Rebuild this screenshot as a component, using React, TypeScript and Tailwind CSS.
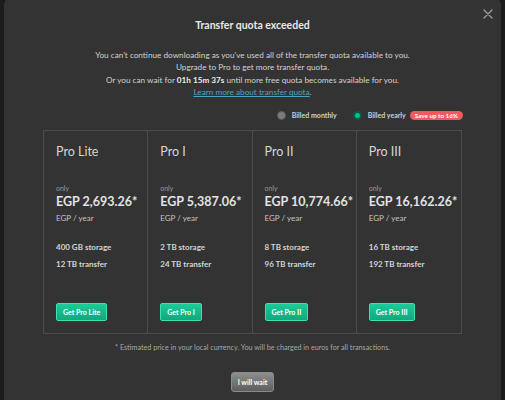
import React, { useState } from "react";

const plans = [
  { name: "Pro Lite", price: "EGP 2,693.26*", storage: "400 GB storage", transfer: "12 TB transfer" },
  { name: "Pro I", price: "EGP 5,387.06*", storage: "2 TB storage", transfer: "24 TB transfer" },
  { name: "Pro II", price: "EGP 10,774.66*", storage: "8 TB storage", transfer: "96 TB transfer" },
  { name: "Pro III", price: "EGP 16,162.26*", storage: "16 TB storage", transfer: "192 TB transfer" },
];

export default function App() {
  const [yearly, setYearly] = useState(true);

  return (
    <div className="w-[505px] h-[400px] overflow-hidden bg-[#1c1c1c] font-['Lato','Open_Sans',sans-serif]">
      <div className="relative mx-[4px] mt-[-6px] h-[420px] rounded-[12px] bg-[#333333] text-[#e6e6e6]">
        <button className="absolute right-[8px] top-[15px] text-[#9a9a9a]">
          <svg width="10" height="10" viewBox="0 0 10 10" stroke="currentColor" strokeWidth="1.4" strokeLinecap="round">
            <path d="M1 1 L9 9 M9 1 L1 9" />
          </svg>
        </button>

        <h1 className="pt-[24px] text-center text-[10.5px] font-bold leading-[14px] text-[#e8e8e8]">
          Transfer quota exceeded
        </h1>

        <div className="mt-[17px] text-center text-[8.2px] leading-[12.4px] text-[#d2d2d2]">
          <p>You can't continue downloading as you've used all of the transfer quota available to you.</p>
          <p>Upgrade to Pro to get more transfer quota.</p>
          <p>
            Or you can wait for <b className="text-[#ececec]">01h 15m 37s</b> until more free quota becomes available for you.
          </p>
          <p>
            <a className="text-[#4da2c4] underline">Learn more about transfer quota</a>.
          </p>
        </div>

        <div className="mt-[12px] mr-[38px] flex h-[10px] items-center justify-end text-[7px] font-bold text-[#d0d0d0]">
          <button onClick={() => setYearly(false)} className="flex items-center gap-[6px]">
            <span
              className={
                yearly
                  ? "h-[9px] w-[9px] rounded-full bg-[#7c7c7c] border border-[#5a5a5a]"
                  : "h-[9px] w-[9px] rounded-full bg-[#00b386] border-2 border-[#0a5c46]"
              }
            />
            Billed monthly
          </button>
          <button onClick={() => setYearly(true)} className="ml-[16px] flex items-center gap-[6px]">
            <span
              className={
                yearly
                  ? "h-[9px] w-[9px] rounded-full bg-[#00c08f] border-2 border-[#0c5a45]"
                  : "h-[9px] w-[9px] rounded-full bg-[#7c7c7c] border border-[#5a5a5a]"
              }
            />
            Billed yearly
          </button>
          <span className="ml-[4px] rounded-full bg-[#f05a5f] px-[5px] text-[6.3px] leading-[9px] font-bold text-white">
            Save up to 16%
          </span>
        </div>

        <div className="mx-[39px] mt-[9px] grid grid-cols-4 border border-[#4c4c4c]">
          {plans.map((p, i) => (
            <div
              key={p.name}
              className={"flex h-[202px] flex-col px-[12px] pt-[13px] " + (i < 3 ? "border-r border-[#4c4c4c]" : "")}
            >
              <div className="text-[12.5px] leading-[16px] text-[#d6d6d6]">{p.name}</div>
              <div className="mt-[23px] text-[7px] leading-[10px] text-[#9a9a9a]">only</div>
              <div className="mt-[1px] text-[12.5px] font-bold leading-[16px] text-[#e2e2e2] whitespace-nowrap">{p.price}</div>
              <div className="mt-[2px] text-[8px] leading-[12px] text-[#c4c4c4]">EGP / year</div>
              <div className="mt-[17px] text-[8px] font-bold leading-[12px] text-[#d4d4d4]">{p.storage}</div>
              <div className="mt-[5px] text-[8px] font-bold leading-[12px] text-[#d4d4d4]">{p.transfer}</div>
              <button className="mt-[33px] h-[18px] self-start rounded-[2px] border border-[#3ee0b0] bg-gradient-to-b from-[#1ccb98] to-[#10a87c] px-[6px] text-[7px] font-bold leading-[16px] text-white">
                Get {p.name}
              </button>
            </div>
          ))}
        </div>

        <p className="mt-[9px] text-center text-[7.2px] leading-[10px] text-[#a8a8a8]">
          * Estimated price in your local currency. You will be charged in euros for all transactions.
        </p>

        <div className="mt-[19px] flex justify-center">
          <button className="h-[20px] rounded-[3px] border border-[#8a8a8a] bg-gradient-to-b from-[#8e8e8e] to-[#5e5e5e] px-[6px] text-[7px] font-bold leading-[18px] text-white">
            I will wait
          </button>
        </div>
      </div>
    </div>
  );
}
